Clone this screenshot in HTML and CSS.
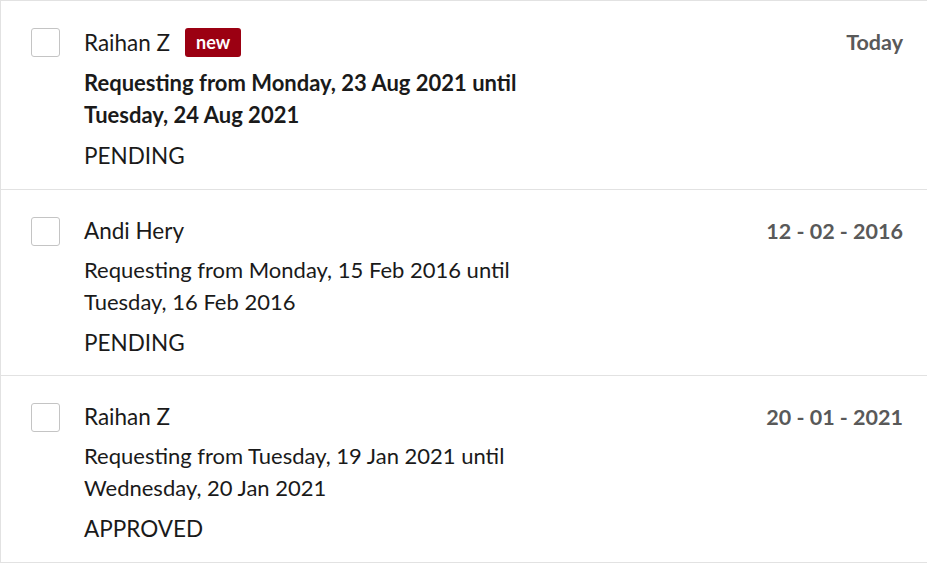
FILE: index.html
```html
<!DOCTYPE html>
<html lang="en">
<head>
  <meta charset="UTF-8" />
  <meta name="viewport" content="width=device-width, initial-scale=1.0"/>
  <title>Leave requests</title>
  <link rel="stylesheet" href="styles.css">
</head>
<body>
  <div class="request-list">
    <div class="request unread">
      <label class="check"><input type="checkbox" /><span class="box"></span></label>
      <div class="details">
        <div class="name-row">
          <span class="name">Raihan Z</span>
          <span class="badge-new">new</span>
        </div>
        <p class="period">Requesting from Monday, 23 Aug 2021 until<br>Tuesday, 24 Aug 2021</p>
        <p class="status">PENDING</p>
      </div>
      <div class="date">Today</div>
    </div>

    <div class="request">
      <label class="check"><input type="checkbox" /><span class="box"></span></label>
      <div class="details">
        <div class="name-row">
          <span class="name">Andi Hery</span>
        </div>
        <p class="period">Requesting from Monday, 15 Feb 2016 until<br>Tuesday, 16 Feb 2016</p>
        <p class="status">PENDING</p>
      </div>
      <div class="date">12 - 02 - 2016</div>
    </div>

    <div class="request">
      <label class="check"><input type="checkbox" /><span class="box"></span></label>
      <div class="details">
        <div class="name-row">
          <span class="name">Raihan Z</span>
        </div>
        <p class="period">Requesting from Tuesday, 19 Jan 2021 until<br>Wednesday, 20 Jan 2021</p>
        <p class="status">APPROVED</p>
      </div>
      <div class="date">20 - 01 - 2021</div>
    </div>
  </div>
</body>
</html>
```

FILE: styles.css
```css
:root {
  --border: #e2e2e2;
  --text-color: #1a1a1a;
  --muted: #595959;
  --accent: #9b0012;
}
body {
  margin: 0;
  font-family: Lato, 'Open Sans', sans-serif;
  color: var(--text-color);
  background: #fff;
  overflow: hidden;
}
.request-list {
  border-top: 1px solid var(--border);
  border-left: 1px solid var(--border);
}
.request {
  display: flex;
  align-items: flex-start;
  padding: 27px 24px 16px 30px;
  border-bottom: 1px solid var(--border);
}
.request.unread,
.request:last-child {
  padding-bottom: 17px;
}
.check {
  flex: none;
  margin-right: 24px;
  cursor: pointer;
}
.check input {
  display: none;
}
.check .box {
  display: block;
  width: 27px;
  height: 27px;
  border: 1px solid #c4c4c4;
  border-radius: 3px;
  background: #fff;
}
.details {
  flex: 1;
}
.name-row {
  display: flex;
  align-items: center;
  gap: 15px;
}
.name {
  font-size: 22.5px;
  line-height: 27px;
}
.badge-new {
  background: var(--accent);
  color: #fff;
  font-size: 18px;
  font-weight: bold;
  line-height: 29px;
  padding: 0 11px;
  border-radius: 3px;
}
.period {
  margin: 10px 0 0;
  font-size: 22px;
  line-height: 32px;
}
.status {
  margin: 9px 0 0;
  font-size: 22.5px;
  line-height: 32px;
}
.unread .period {
  font-weight: bold;
}
.date {
  flex: none;
  font-size: 21.5px;
  font-weight: bold;
  line-height: 29px;
  color: var(--muted);
}
```
